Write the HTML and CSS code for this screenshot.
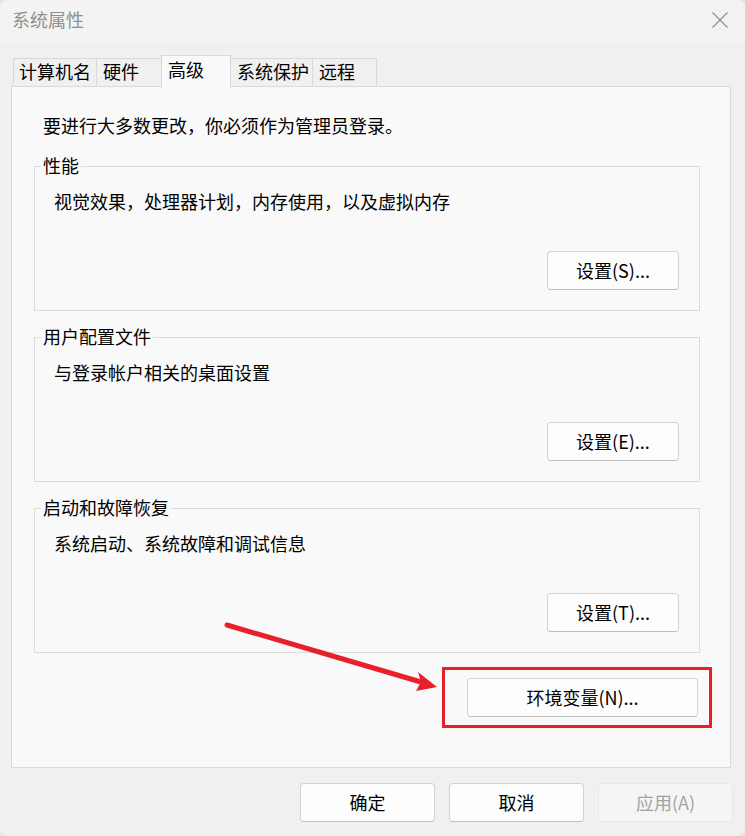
FILE: index.html
```html
<!DOCTYPE html>
<html lang="zh-CN">
<head>
    <meta charset="UTF-8">
    <meta name="viewport" content="width=device-width, initial-scale=1.0">
    <title>系统属性</title>
    <link rel="stylesheet" href="styles.css">
</head>
<body>
    <div class="window">
        <div class="titlebar">
            <span class="title">系统属性</span>
            <svg class="close" width="16" height="16" viewBox="0 0 16 16">
                <path d="M0.5 0.5 L15.5 15.5 M15.5 0.5 L0.5 15.5" stroke="#8a8a8a" stroke-width="1.1" fill="none"/>
            </svg>
        </div>

        <div class="tabs">
            <div class="tab tab-name">计算机名</div>
            <div class="tab tab-hw">硬件</div>
            <div class="tab tab-adv active">高级</div>
            <div class="tab tab-protect">系统保护</div>
            <div class="tab tab-remote">远程</div>
        </div>

        <div class="panel">
            <p class="note">要进行大多数更改，你必须作为管理员登录。</p>

            <fieldset class="group">
                <legend>性能</legend>
                <p class="desc">视觉效果，处理器计划，内存使用，以及虚拟内存</p>
                <div class="group-actions">
                    <button class="btn">设置(S)...</button>
                </div>
            </fieldset>

            <fieldset class="group">
                <legend>用户配置文件</legend>
                <p class="desc">与登录帐户相关的桌面设置</p>
                <div class="group-actions">
                    <button class="btn">设置(E)...</button>
                </div>
            </fieldset>

            <fieldset class="group">
                <legend>启动和故障恢复</legend>
                <p class="desc">系统启动、系统故障和调试信息</p>
                <div class="group-actions">
                    <button class="btn">设置(T)...</button>
                </div>
            </fieldset>

            <div class="env-row">
                <div class="highlight">
                    <button class="btn env-btn">环境变量(N)...</button>
                </div>
            </div>
        </div>

        <div class="footer">
            <button class="btn">确定</button>
            <button class="btn">取消</button>
            <button class="btn" disabled>应用(A)</button>
        </div>

        <!-- annotation arrow -->
        <svg class="arrow" width="745" height="836" viewBox="0 0 745 836">
            <line x1="227" y1="625" x2="421" y2="682" stroke="#e8202a" stroke-width="5" stroke-linecap="round"/>
            <polygon points="437,687 416,691 421,682 418,672" fill="#e8202a"/>
        </svg>
    </div>
</body>
</html>
```

FILE: styles.css
```css
* {
    font-family: "Microsoft YaHei", "Noto Sans CJK SC", sans-serif;
    box-sizing: border-box;
}
body {
    margin: 0;
    background-color: #e4e4e4;
}
.window {
    position: relative;
    width: 745px;
    height: 836px;
    background-color: #f0f0f0;
    border-radius: 8px;
    overflow: hidden;
    font-size: 18px;
    color: #000;
}
.titlebar {
    height: 43px;
    background-color: #f3f3f3;
    display: flex;
    align-items: center;
    justify-content: space-between;
    padding: 0 17px 5px 12px;
}
.title {
    color: #8f8f8f;
    line-height: 24px;
}
.close {
    display: block;
    margin-top: 2px;
}

/* tabs */
.tabs {
    display: flex;
    align-items: flex-end;
    height: 31px;
    margin-top: 12px;
    padding-left: 13px;
    position: relative;
    z-index: 1;
}
.tab {
    height: 28px;
    border: 1px solid #d9d9d9;
    border-bottom: none;
    margin-right: -1px;
    padding-left: 6px;
    line-height: 25px;
    background-color: #f0f0f0;
    white-space: nowrap;
}
.tab-name { width: 84px; padding-left: 5px; }
.tab-hw { width: 66px; }
.tab-adv { width: 70px; }
.tab-protect { width: 83px; }
.tab-remote { width: 65px; }
.tab.active {
    height: 32px;
    margin-bottom: -1px;
    background-color: #f9f9f9;
    line-height: 27px;
}

/* panel */
.panel {
    height: 682px;
    margin: 0 14px 0 11px;
    border: 1px solid #dadada;
    background-color: #f9f9f9;
    padding: 27px 30px 0 22px;
}
.note {
    margin: 0 0 16px 9px;
    line-height: 22px;
    padding-bottom: 2px;
}
.group {
    margin: 0 0 14px 0;
    padding: 0 20px 20px 0;
    border: 1px solid #dcdcdc;
    min-width: 0;
}
.group legend {
    margin-left: 6px;
    padding: 0 2px 2px;
    line-height: 22px;
}
.desc {
    margin: 12px 0 0 19px;
    line-height: 22px;
    padding-bottom: 2px;
}
.group-actions {
    display: flex;
    justify-content: flex-end;
    margin-top: 37px;
}

/* buttons */
.btn {
    width: 132px;
    height: 39px;
    font-size: 18px;
    color: #000;
    background-color: #fdfdfd;
    border: 1px solid #d3d3d3;
    border-bottom-color: #bdbdbd;
    border-radius: 4px;
    padding: 0 0 2px;
    line-height: 22px;
}
.btn:disabled {
    color: #a3a3a3;
    background-color: #f5f5f5;
    border-color: #e8e8e8;
}

.env-row {
    display: flex;
    justify-content: flex-end;
    margin-top: 12px;
    margin-right: -12px;
}
.highlight {
    border: 3px solid #e8202a;
    padding: 8px 11px 8px 22px;
}
.env-btn {
    width: 231px;
}

.footer {
    display: flex;
    justify-content: flex-end;
    gap: 14px;
    margin-top: 15px;
    padding-right: 12px;
}
.footer .btn {
    width: 135px;
}

.arrow {
    position: absolute;
    left: 0;
    top: 0;
    pointer-events: none;
}
```
